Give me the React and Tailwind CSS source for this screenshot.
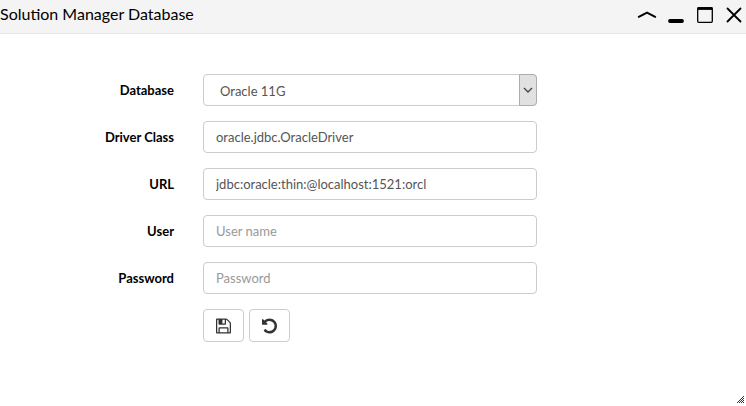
import { useState } from "react";

const rowClass = "grid grid-cols-12";
const labelClass = "col-span-3 pr-[14px] text-right font-bold text-black leading-8";
const controlClass =
  "block h-8 w-full rounded border border-[#ccc] bg-white px-3 text-[13px] text-[#555] outline-none placeholder:text-[#999]";
const buttonClass =
  "flex h-[33px] w-[41px] items-center justify-center rounded border border-[#ccc] bg-white text-[#333]";

function Field({ id, label, children }) {
  return (
    <div className={rowClass}>
      <label htmlFor={id} className={labelClass}>{label}</label>
      <div className="col-span-6 px-[15px]">{children}</div>
    </div>
  );
}

function TextField({ id, label, type = "text", initial = "", placeholder }) {
  const [value, setValue] = useState(initial);
  return (
    <Field id={id} label={label}>
      <input
        id={id}
        type={type}
        value={value}
        placeholder={placeholder}
        onChange={(e) => setValue(e.target.value)}
        className={controlClass}
      />
    </Field>
  );
}

function WindowButton({ label, children }) {
  return (
    <button type="button" aria-label={label} className="flex h-5 w-5 items-center justify-center">
      <svg width="20" height="20" viewBox="0 0 20 20" fill="none" stroke="#000" aria-hidden="true">
        {children}
      </svg>
    </button>
  );
}

export default function App() {
  return (
    <div className="relative flex min-h-screen flex-col bg-white font-['Lato','Noto_Sans',sans-serif] text-[13px]">
      <header className="flex h-[34px] items-center justify-between border-b border-[#e5e5e5] bg-[#f4f4f4] pr-0.5 pb-1.5">
        <h1 className="text-base leading-6 text-black">Solution Manager Database</h1>
        <div className="flex gap-[9px]">
          <WindowButton label="Collapse">
            <path d="M1.8 12.8 L10 8.6 L18.2 12.8" strokeWidth="2" strokeLinecap="round" strokeLinejoin="round" />
          </WindowButton>
          <WindowButton label="Minimize">
            <path d="M4 17H16" strokeWidth="3.8" strokeLinecap="round" />
          </WindowButton>
          <WindowButton label="Maximize">
            <rect x="2.7" y="4" width="14.6" height="14.3" rx="1" strokeWidth="1.3" />
            <path d="M2.5 4.5H17.5" strokeWidth="2.8" />
          </WindowButton>
          <WindowButton label="Close">
            <path d="M3.5 4.5L16.5 17.5M16.5 4.5L3.5 17.5" strokeWidth="1.8" strokeLinecap="round" />
          </WindowButton>
        </div>
      </header>

      <form className="mr-3 ml-1.5 flex flex-col gap-[15px] pt-10" onSubmit={(e) => e.preventDefault()}>
        <Field id="database" label="Database">
          <div className="relative">
            <select id="database" className={`${controlClass} appearance-none pt-1 pl-4`}>
              <option>Oracle 11G</option>
            </select>
            <span className="pointer-events-none absolute inset-y-0 right-0 flex w-[18px] items-center justify-center rounded-r-sm border border-[#adadad] bg-[#e1e1e1]">
              <svg width="10" height="6" viewBox="0 0 10 6" fill="none" stroke="#444" strokeWidth="1.3" aria-hidden="true">
                <path d="M1 1L5 5L9 1" />
              </svg>
            </span>
          </div>
        </Field>
        <TextField id="driver" label="Driver Class" initial="oracle.jdbc.OracleDriver" />
        <TextField id="url" label="URL" initial="jdbc:oracle:thin:@localhost:1521:orcl" />
        <TextField id="user" label="User" placeholder="User name" />
        <TextField id="password" label="Password" type="password" placeholder="Password" />
        <div className={rowClass}>
          <div className="col-span-6 col-start-4 flex gap-[5px] px-[15px]">
            <button type="submit" aria-label="Save" className={buttonClass}>
              <svg width="15" height="18" viewBox="0 0 1536 1792" fill="currentColor" aria-hidden="true">
                <path d="M384 1536h768v-384H384v384zm896 0h128V640q0-14-10-38.5T1378 567l-281-281q-10-10-34-20t-39-10v416q0 40-28 68t-68 28H352q-40 0-68-28t-28-68V256H128v1280h128v-416q0-40 28-68t68-28h832q40 0 68 28t28 68v416zM896 608V288q0-13-9.5-22.5T864 256H672q-13 0-22.5 9.5T640 288v320q0 13 9.5 22.5T672 640h192q13 0 22.5-9.5T896 608zm640 32v928q0 40-28 68t-68 28H96q-40 0-68-28t-28-68V224q0-40 28-68t68-28h928q40 0 88 20t76 48l280 280q28 28 48 76t20 88z" />
                <path d="M352 256h288v384H352z" />
              </svg>
            </button>
            <button type="reset" aria-label="Reset" className={buttonClass}>
              <svg width="15" height="18" viewBox="0 0 1536 1792" fill="currentColor" aria-hidden="true">
                <path d="M1536 896q0 156-61 298t-164 245-245 164-298 61q-172 0-327-72.5T177 1387q-7-10-6.5-22.5T179 1344l137-138q10-9 25-9 16 2 23 12 73 95 179 147t225 52q104 0 198.5-40.5T1130 1258t109.5-163.5T1280 896t-40.5-198.5T1130 534 966.5 424.5 768 384q-98 0-188 35.5T420 521l137 138q31 30 14 69-17 40-59 40H64q-26 0-45-19T0 704V256q0-42 40-59 39-17 69 14l130 129q107-101 244.5-156.5T768 128q156 0 298 61t245 164 164 245 61 298z" />
              </svg>
            </button>
          </div>
        </div>
      </form>

      <svg className="absolute right-0.5 bottom-[3px]" width="7" height="7" viewBox="0 0 7 7" fill="#333" shapeRendering="crispEdges" aria-hidden="true">
        <path d="M6 0h1v1h-1zM5 1h1v1h-1zM4 2h1v1h-1zM6 2h1v1h-1zM3 3h1v1h-1zM5 3h1v1h-1zM2 4h1v1h-1zM4 4h1v1h-1zM6 4h1v1h-1zM1 5h1v1h-1zM3 5h1v1h-1zM5 5h1v1h-1zM0 6h1v1h-1zM2 6h1v1h-1zM4 6h1v1h-1zM6 6h1v1h-1z" />
      </svg>
    </div>
  );
}
